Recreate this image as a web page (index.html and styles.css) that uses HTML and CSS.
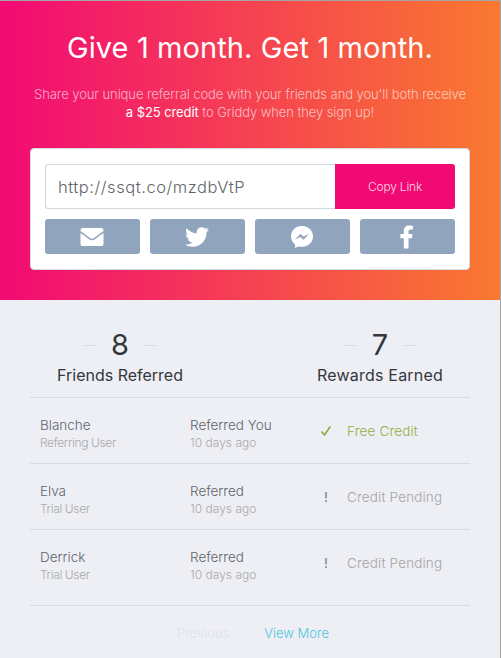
FILE: index.html
```html
<!DOCTYPE html>
<html lang="en">
<head>
<meta charset="utf-8">
<title>Refer a friend</title>
<link rel="stylesheet" href="styles.css">
</head>
<body>
<main class="widget">
  <header class="hero">
    <h1 class="title">Give 1 month. Get 1 month.</h1>
    <p class="intro">Share your unique referral code with your friends and you'll both receive<br><strong>a $25 credit</strong> to Griddy when they sign up!</p>
    <section class="share">
      <div class="link-row">
        <div class="link">http://ssqt.co/mzdbVtP</div>
        <button class="copy">Copy Link</button>
      </div>
      <div class="socials">
        <a class="social"><svg width="24" height="20" viewBox="0 0 24 20"><path d="M2.800 1h18.400q2.300 0 2.300 2.200v.9L14 11q-2 1.300-4 0L.5 4.100v-.9Q.5 1 2.800 1z"/><path d="M.5 5.900l8.700 6.400q2.800 1.900 5.600 0l8.700-6.400v11q0 2.200-2.300 2.200H2.800Q.5 19.100.5 16.900z"/></svg></a>
        <a class="social"><svg width="24" height="24" viewBox="0 0 512 512"><path d="M459.370 151.716c.325 4.548.325 9.097.325 13.645 0 138.720-105.583 298.558-298.558 298.558-59.452 0-114.680-17.219-161.137-47.106 8.447.974 16.568 1.299 25.340 1.299 49.055 0 94.213-16.568 130.274-44.832-46.132-.975-84.792-31.188-98.112-72.772 6.498.974 12.995 1.624 19.818 1.624 9.421 0 18.843-1.300 27.614-3.573-48.081-9.747-84.143-51.980-84.143-102.985v-1.299c13.969 7.797 30.214 12.670 47.431 13.319-28.264-18.843-46.781-51.005-46.781-87.391 0-19.492 5.197-37.360 14.294-52.954 51.655 63.675 129.300 105.258 216.365 109.807-1.624-7.797-2.599-15.918-2.599-24.040 0-57.828 46.782-104.934 104.934-104.934 30.213 0 57.502 12.670 76.670 33.137 23.715-4.548 46.456-13.320 66.599-25.340-7.798 24.366-24.366 44.833-46.132 57.827 21.117-2.273 41.584-8.122 60.426-16.243-14.292 20.791-32.161 39.308-52.628 54.253z"/></svg></a>
        <a class="social"><svg width="24" height="24" viewBox="0 0 24 24"><path fill-rule="evenodd" d="M11.900 1C5.600 1 1 5.400 1 11.300c0 3.600 1.600 6.400 4.200 8.300L5 23l3.300-1.600c1.100.3 2.300.4 3.600.4 6.300 0 11.100-4.500 11.100-10.500S18.200 1 11.900 1zM5 14.700l5.300-5.800 3.300 2.700 5.400-2.600-5.400 5.700-3.200-2.700z"/></svg></a>
        <a class="social"><svg width="14" height="24" viewBox="0 0 14 24"><path d="M3.800 23.500V13.200H.4V8.900h3.400V6.100C3.800 2.500 5.800.5 9.400.5c1.700 0 3.500.3 3.500.3v3.700h-2.200c-1.700 0-2.200 1-2.200 2.100v2.300h4l-.6 4.300H8.500v10.300z"/></svg></a>
      </div>
    </section>
  </header>
  <section class="stats">
    <div class="stat"><div class="count"><i></i><b>8</b><i></i></div><div class="label">Friends Referred</div></div>
    <div class="stat"><div class="count"><i></i><b>7</b><i></i></div><div class="label label-rewards">Rewards Earned</div></div>
  </section>
  <ul class="referrals">
    <li class="row">
      <div><div class="name">Blanche</div><div class="sub role">Referring User</div></div>
      <div><div class="name">Referred You</div><div class="sub">10 days ago</div></div>
      <div class="reward earned"><svg class="mark" width="12" height="12" viewBox="0 0 12 12"><path d="M1.500 6.500l3 3.500L10.300 1.500" fill="none" stroke="#8aaa3c" stroke-width="1.500"/></svg><span>Free Credit</span></div>
    </li>
    <li class="row">
      <div><div class="name">Elva</div><div class="sub role">Trial User</div></div>
      <div><div class="name">Referred</div><div class="sub">10 days ago</div></div>
      <div class="reward"><svg class="mark" width="12" height="12" viewBox="0 0 12 12"><path d="M4.800 1h2.400L7 7.500H5zM5 9h2v2H5z" fill="#91a7bf"/></svg><span>Credit Pending</span></div>
    </li>
    <li class="row">
      <div><div class="name">Derrick</div><div class="sub role">Trial User</div></div>
      <div><div class="name">Referred</div><div class="sub">10 days ago</div></div>
      <div class="reward"><svg class="mark" width="12" height="12" viewBox="0 0 12 12"><path d="M4.800 1h2.400L7 7.500H5zM5 9h2v2H5z" fill="#91a7bf"/></svg><span>Credit Pending</span></div>
    </li>
  </ul>
  <nav class="pager"><span class="previous">Previous</span><span class="more">View More</span></nav>
</main>
</body>
</html>
```
FILE: styles.css
```css
* { box-sizing: border-box; }
body { margin: 0; background: #eeeff5; font-family: Inter, "Liberation Sans", sans-serif; color: #60656a; }
.widget { height: 658px; border-top: 1px solid #a5a5a5; border-right: 1px solid #a5a5a5; overflow: hidden; }
.hero { height: 299px; padding: 27px 30px 0; background: linear-gradient(90deg, #f20a74, #f9792f); text-align: center; color: #fff; }
.title { margin: 0; font-size: 29px; line-height: 40px; font-weight: 400; white-space: nowrap; letter-spacing: 0.1px; }
.intro { margin: 17px -10px 0; font-size: 13px; line-height: 18px; font-weight: 300; color: rgba(255,255,255,.66); white-space: nowrap; letter-spacing: -0.08px; }
.intro strong { font-weight: 400; color: #fff; }
.share { margin-top: 27px; height: 122px; padding: 15px 14px; background: #fff; border: 1px solid #d3dce3; border-radius: 4px; }
.link-row { display: flex; height: 45px; }
.link { flex: 1; padding-left: 12px; border: 1px solid #cfd8e1; border-right: 0; border-radius: 3px 0 0 3px; text-align: left; font-size: 16.500px; line-height: 44px; color: #60656a; font-weight: 300; letter-spacing: 0.550px; }
.copy { width: 120px; padding: 0; border: 0; border-radius: 0 3px 3px 0; background: #f20a74; color: rgba(255,255,255,.85); font: 300 12px Inter, sans-serif; letter-spacing: -0.2px; }
.socials { display: grid; grid-template-columns: repeat(4, 1fr); gap: 10px; margin-top: 10px; }
.social { display: flex; align-items: center; justify-content: center; height: 35px; padding-right: 1px; border-radius: 3px; background: #90a5bd; }
.social svg { fill: #fff; }
.stats { display: flex; justify-content: space-between; height: 98px; margin: 0 30px; padding-top: 27px; border-bottom: 1px solid #d8dbe1; color: #33373b; }
.stat { width: 180px; text-align: center; }
.count { display: flex; align-items: center; justify-content: center; gap: 16px; height: 36px; }
.count b { font-size: 29px; font-weight: 400; line-height: 36px; }
.count i { width: 11px; height: 1px; background: #d3dce3; }
.label { font-size: 16px; line-height: 24px; white-space: nowrap; }
.label-rewards { letter-spacing: 0.2px; }
.referrals { margin: 0 30px; padding: 0 0 10px; list-style: none; border-bottom: 1px solid #d8dbe1; }
.row { display: grid; grid-template-columns: 150px 127px 1fr; height: 66px; padding: 18px 0 0 10px; border-bottom: 1px solid #d8dbe1; }
.row:last-child { border-bottom: 0; height: 65px; }
.name { font-size: 13.500px; line-height: 19px; font-weight: 300; white-space: nowrap; }
.sub { font-size: 12px; line-height: 16px; font-weight: 300; color: #a9a9aa; white-space: nowrap; }
.role { letter-spacing: -0.350px; }
.reward { display: flex; align-items: center; gap: 15px; height: 30px; font-size: 13.500px; font-weight: 300; color: #a3a4a6; white-space: nowrap; letter-spacing: 0.170px; }
.mark { margin-left: 3px; }
.earned { color: #93ad45; }
.pager { display: flex; gap: 35px; padding: 17px 0 0 177px; font-size: 13px; line-height: 20px; font-weight: 300; }
.previous { color: #dfe2e8; }
.more { color: #4cc5d8; }
```
